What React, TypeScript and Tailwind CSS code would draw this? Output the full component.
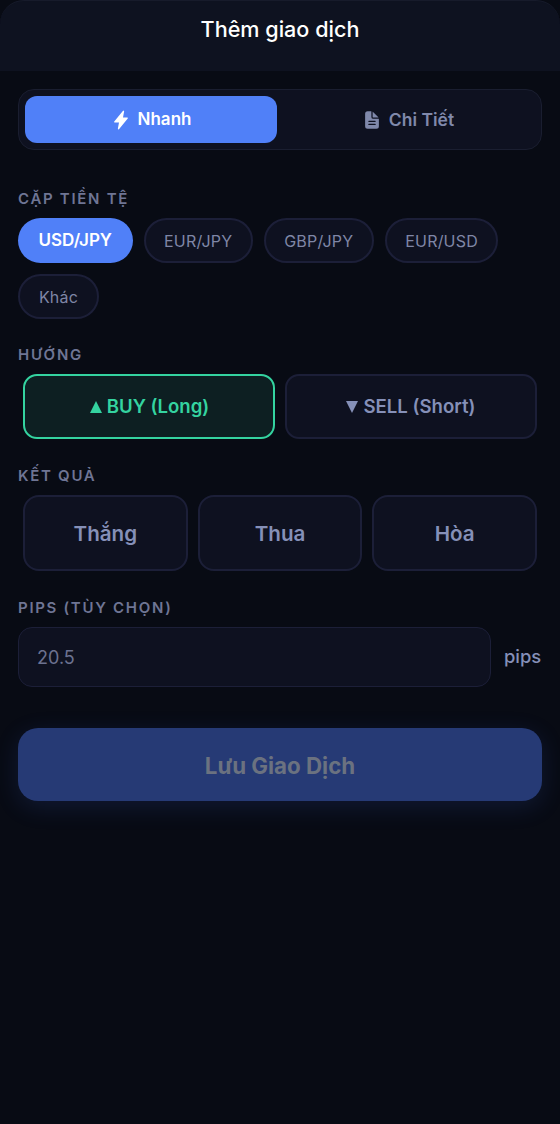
import { IoDocumentText, IoFlash } from 'react-icons/io5';

const pairs = ['USD/JPY', 'EUR/JPY', 'GBP/JPY', 'EUR/USD', 'Khác'];

function Label({ children, className }: { children: string; className: string }) {
  return (
    <div className={`text-[15px] leading-[18px] font-semibold tracking-[1.7px] text-[#6f7594] mb-[10px] ${className}`}>
      {children}
    </div>
  );
}

export default function App() {
  return (
    <div className="w-[560px] h-[1124px] overflow-hidden bg-[#080b14] font-['Inter',sans-serif]">
      <header className="h-[71px] flex items-center justify-center pb-[14px] bg-[#0e1220] rounded-t-[24px] border-t border-[#171b2b]">
        <h1 className="text-[21.6px] font-medium text-white">Thêm giao dịch</h1>
      </header>

      <main className="px-[18px] pt-[18px]">
        <div className="h-[61px] flex gap-[4px] p-[6px] rounded-[16px] bg-[#0e1120] border border-[#1a1e30]">
          <button className="w-[252px] flex items-center justify-center gap-[7px] rounded-[12px] bg-[#5080f8] text-white text-[17px] font-semibold">
            <IoFlash size={20} />
            Nhanh
          </button>
          <button className="flex-1 pt-[1px] flex items-center justify-center gap-[7px] rounded-[12px] text-[#8089ab] text-[17.5px] font-semibold">
            <IoDocumentText size={20} />
            Chi Tiết
          </button>
        </div>

        <Label className="mt-[40px]">CẶP TIỀN TỆ</Label>
        <div className="flex flex-wrap gap-x-[11px] gap-y-[11px]">
          {pairs.map((pair, i) =>
            i === 0 ? (
              <button key={pair} className="h-[45px] px-[20.5px] rounded-full bg-[#5080f8] text-white text-[17px] font-semibold">
                {pair}
              </button>
            ) : (
              <button key={pair} className="h-[45px] min-w-[81px] px-[18.5px] rounded-full bg-[#0e1120] border-2 border-[#1c1f38] text-[#7f86a6] text-[16px] tracking-[0.2px]">
                {pair}
              </button>
            ),
          )}
        </div>

        <Label className="mt-[27px]">HƯỚNG</Label>
        <div className="px-[5px] grid grid-cols-2 gap-[10px]">
          <button className="h-[65px] pl-[1px] flex items-center justify-center gap-[5px] rounded-[14px] bg-[#0d1f22] border-2 border-[#34d3a0] text-[#34d3a0] text-[18.6px] font-semibold">
            <span className="w-0 h-0 border-x-[6.5px] border-x-transparent border-b-[12px] border-b-[#34d3a0]" />
            BUY (Long)
          </button>
          <button className="h-[65px] flex items-center justify-center gap-[5px] rounded-[14px] bg-[#0e1120] border-2 border-[#1c1f38] text-[#8590b8] text-[18.6px] font-semibold">
            <span className="w-0 h-0 border-x-[6.5px] border-x-transparent border-t-[12px] border-t-[#8590b8]" />
            SELL (Short)
          </button>
        </div>

        <Label className="mt-[28px]">KẾT QUẢ</Label>
        <div className="px-[5px] grid grid-cols-3 gap-[10px]">
          {['Thắng', 'Thua', 'Hòa'].map((r) => (
            <button key={r} className="h-[76px] pt-[2px] rounded-[16px] bg-[#0e1120] border-2 border-[#1c1f38] text-[#8590b8] text-[20.6px] font-semibold">
              {r}
            </button>
          ))}
        </div>

        <Label className="mt-[28px]">PIPS (TÙY CHỌN)</Label>
        <div className="flex items-center gap-[13px]">
          <div className="w-[473px] h-[60px] flex items-center px-[18px] rounded-[14px] bg-[#0e1120] border border-[#1c1f38] text-[18px] text-[#6c7290]">
            20.5
          </div>
          <span className="pb-[1px] text-[#8590b8] text-[18.4px] font-medium">pips</span>
        </div>

        <button className="mt-[41px] w-full h-[73px] pt-[2px] rounded-[20px] bg-[#263a75] text-[#6b7280] text-[22.3px] font-bold shadow-[0_6px_24px_rgba(60,100,220,0.16)]">
          Lưu Giao Dịch
        </button>
      </main>
    </div>
  );
}
